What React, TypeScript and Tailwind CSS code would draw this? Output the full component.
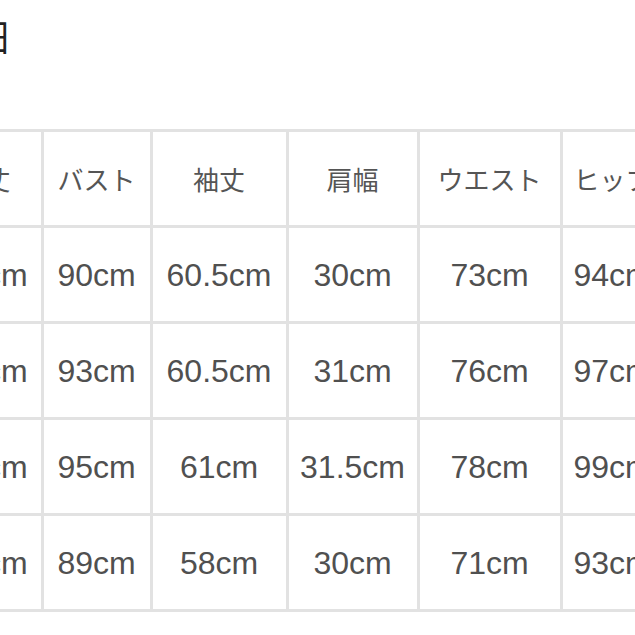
const headers = ["着丈", "バスト", "袖丈", "肩幅", "ウエスト", "ヒップ"];

const rows = [
  ["64cm", "90cm", "60.5cm", "30cm", "73cm", "94cm"],
  ["66cm", "93cm", "60.5cm", "31cm", "76cm", "97cm"],
  ["66cm", "95cm", "61cm", "31.5cm", "78cm", "99cm"],
  ["63cm", "89cm", "58cm", "30cm", "71cm", "93cm"],
];

export default function App() {
  return (
    <div className="h-[635px] w-[635px] overflow-hidden bg-white">
      <div className="ml-[-180px] whitespace-nowrap pt-[16px] font-['Noto_Sans_CJK_JP',sans-serif] text-[38px] leading-[38px] text-[#222]">
        サイズ詳細
      </div>
      <div className="ml-[-66.5px] mt-[75px] inline-grid grid-cols-[104px_106px_133px_128px_140px_100px] gap-[3px] bg-[#e2e2e2] p-[3px]">
        {headers.map((h, j) => (
          <div
            key={h}
            className={
              "flex h-[93px] items-center justify-center whitespace-nowrap bg-white font-['Noto_Sans_CJK_JP',sans-serif] text-[26px] text-[#555]" +
              (j === 0 ? " pr-[8px]" : "")
            }
          >
            {h}
          </div>
        ))}
        {rows.map((row, i) =>
          row.map((cell, j) => (
            <div
              key={i + "-" + j}
              className="flex h-[93px] items-center justify-center whitespace-nowrap bg-white font-['Liberation_Sans','Noto_Sans_CJK_JP',sans-serif] text-[32px] text-[#505050]"
            >
              {cell}
            </div>
          ))
        )}
      </div>
    </div>
  );
}
